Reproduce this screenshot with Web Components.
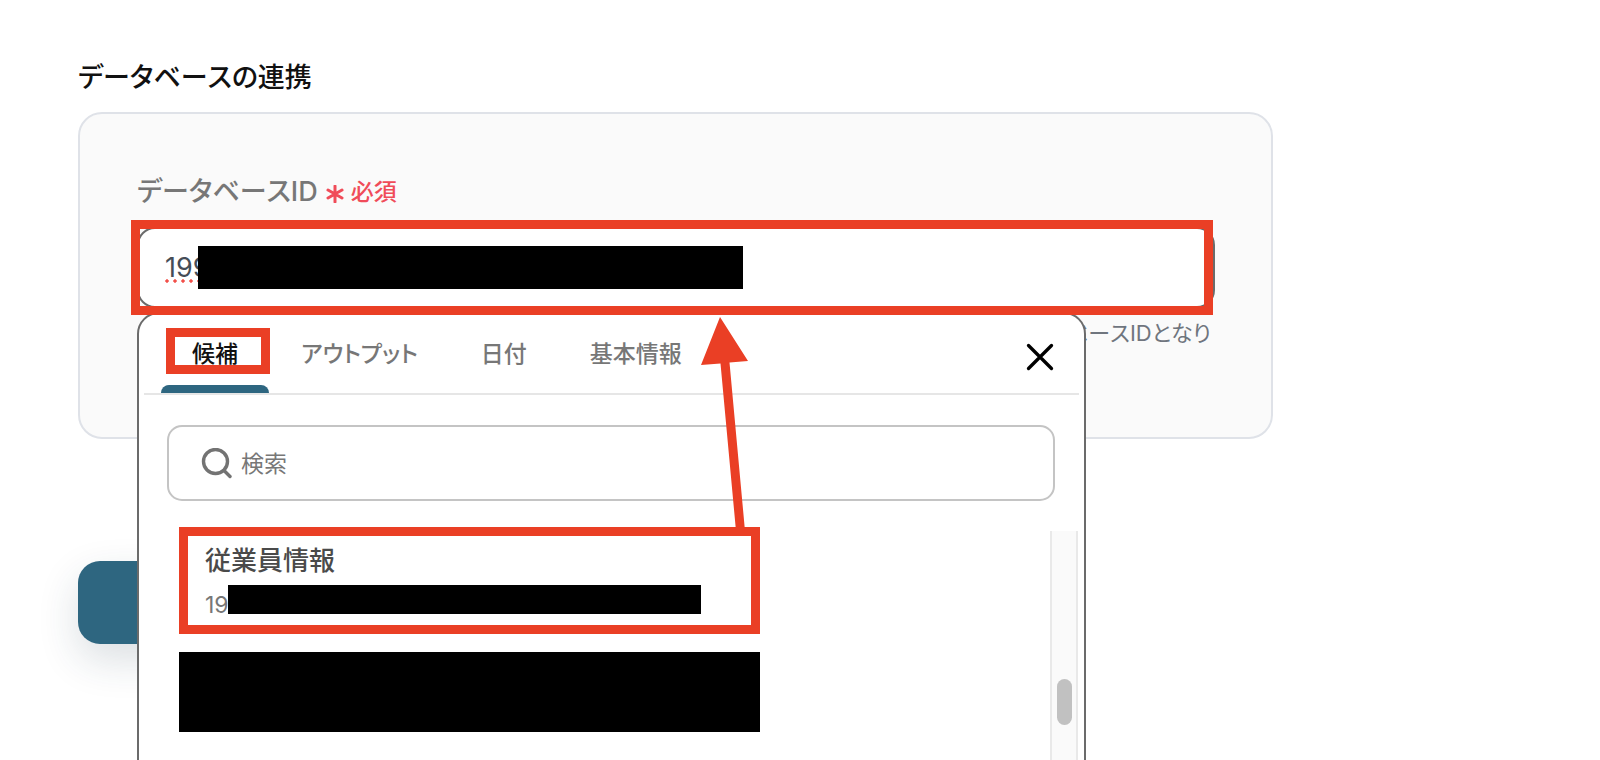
<!DOCTYPE html>
<html lang="ja">
<head>
<meta charset="utf-8">
<meta name="viewport" content="width=device-width, initial-scale=1">
<title>データベースの連携</title>
<style>
  body {
    margin: 0;
    background: #fff;
    font-family: Inter, "Noto Sans CJK JP", sans-serif;
    font-kerning: none;
    --text-l: 27px;
    --text-m: 23px;
    --mark: #ea3f25;
    --accent: #2e6680;
    --outline: #6b6b6b;
  }
</style>
</head>
<body>
<settings-page></settings-page>
<script>
const define = (name, html) => customElements.define(name, class extends HTMLElement {
  constructor() {
    super();
    const t = document.createElement('template');
    t.innerHTML = html;
    this.attachShadow({ mode: 'open' }).append(t.content.cloneNode(true));
  }
});

/* Red outline laid over the content it surrounds */
define('mark-frame', `
<style>
  :host { display: block; position: absolute; box-sizing: border-box; border: 9px solid var(--mark); pointer-events: none; z-index: 30; }
</style>`);

/* Black bar that hides private data */
define('redaction-bar', `
<style>:host { display: block; background: #000; }</style>`);

define('section-card', `
<style>
  :host { display: block; }
  h2 { margin: 0 0 14px; font-size: var(--text-l); line-height: 40px; font-weight: 500; color: #111; font-feature-settings: "palt"; }
  .card { border: 2px solid #dfe2e8; border-radius: 24px; background: #fafafa; padding: 58px 56px 56px 57px; }
</style>
<section aria-labelledby="h">
  <h2 id="h"><slot name="title"></slot></h2>
  <div class="card"><slot></slot></div>
</section>`);

define('tab-bar', `
<style>
  :host { display: flex; align-items: flex-end; justify-content: space-between; margin: 0 5px; border-bottom: 2px solid #e6e6e6; }
  .tabs { display: flex; gap: 1px; margin-left: 17px; }
  .tabs button { position: relative; height: 79px; padding: 1px 31px 0; border: 0; background: none; color: #777;
    font: 500 var(--text-m)/32px Inter, "Noto Sans CJK JP", sans-serif; font-kerning: none; font-feature-settings: "palt"; }
  .tabs button[aria-selected=true] { color: #111; }
  .tabs button[aria-selected=true]::after { content: ""; position: absolute; left: 0; right: 0; bottom: 0; height: 8px; background: var(--accent); border-radius: 8px 8px 0 0; }
  mark-frame { left: 5px; right: -1px; top: 14px; height: 46px; }
  .close { border: 0; background: none; padding: 0; margin: 0 21px 18px 0; width: 36px; height: 36px; }
  .close svg { display: block; }
</style>
<div class="tabs" role="tablist">
  <button role="tab" aria-selected="true">候補<mark-frame></mark-frame></button>
  <button role="tab" aria-selected="false">アウトプット</button>
  <button role="tab" aria-selected="false">日付</button>
  <button role="tab" aria-selected="false">基本情報</button>
</div>
<button class="close" aria-label="閉じる">
  <svg width="36" height="36" viewBox="0 0 36 36" fill="none" stroke="#000" stroke-width="3.3" stroke-linecap="round"><path d="M6.500 6.500 29.500 29.500M29.500 6.500 6.500 29.500"/></svg>
</button>`);

define('search-box', `
<style>
  :host { display: block; }
  label { display: flex; align-items: center; gap: 8px; box-sizing: border-box; height: 76px; padding: 2px 32px 0; border: 2px solid #c4c4c4; border-radius: 15px; background: #fff; }
  input { flex: 1; min-width: 0; border: 0; padding: 0; outline: 0; background: none; height: 40px; font: 400 var(--text-m)/32px Inter, "Noto Sans CJK JP", sans-serif; color: #444; }
  input::placeholder { color: #777; opacity: 1; }
</style>
<label>
  <svg width="32" height="32" viewBox="0 0 32 32" fill="none" stroke="#737373" stroke-width="3.4" stroke-linecap="round" aria-hidden="true"><circle cx="14.500" cy="13.500" r="12"/><path d="m23 22.500 6 6"/></svg>
  <input type="search" placeholder="検索" aria-label="検索">
</label>`);

define('candidate-item', `
<style>
  :host { display: block; }
  button { position: relative; display: flex; flex-direction: column; align-items: flex-start; box-sizing: border-box; width: 581px; height: 107px; padding: 14px 26px 10px; border: 0; background: #fff; text-align: left; }
  .name { font: 500 26px/40px Inter, "Noto Sans CJK JP", sans-serif; color: #4a4a4a; }
  .id { font: 400 var(--text-m)/32px Inter, "Noto Sans CJK JP", sans-serif; color: #777; padding-top: 8px; }
  redaction-bar { position: absolute; left: 49px; top: 58px; width: 473px; height: 29px; }
  mark-frame { inset: 0; }
</style>
<button>
  <span class="name"><slot name="name"></slot></span>
  <span class="id"><slot name="id"></slot></span>
  <redaction-bar></redaction-bar>
  <mark-frame></mark-frame>
</button>`);

define('scroll-track', `
<style>
  :host { display: block; box-sizing: border-box; width: 28px; padding: 148px 5px 0; border: solid #e9e9e9; border-width: 0 2px; background: #fafafa; }
  .thumb { width: 15px; height: 46px; border-radius: 8px; background: #c1c1c1; }
</style>
<div class="thumb"></div>`);

define('candidate-menu', `
<style>
  :host { display: block; box-sizing: border-box; border: 2px solid var(--outline); border-radius: 22px; background: #fff; }
  search-box { margin: 30px 29px 0 28px; }
  .list { display: flex; justify-content: space-between; margin: 26px 6px 0 40px; }
  .items { display: flex; flex-direction: column; gap: 18px; }
  .items redaction-bar { height: 80px; }
  scroll-track { margin-top: 4px; height: 300px; }
  .arrow { position: absolute; left: 558px; top: 3px; z-index: 31; pointer-events: none; }
</style>
<tab-bar></tab-bar>
<search-box></search-box>
<div class="list">
  <div class="items">
    <candidate-item><span slot="name">従業員情報</span><span slot="id">19</span></candidate-item>
    <redaction-bar></redaction-bar>
  </div>
  <scroll-track></scroll-track>
</div>
<svg class="arrow" width="60" height="216" viewBox="0 0 60 216" fill="#ea3f25" aria-hidden="true"><path d="M23 0 51 44 32.500 45.500 48 214 39 214 23.500 46.500 4 48Z"/></svg>`);

define('database-field', `
<style>
  :host { display: block; }
  .head { display: flex; align-items: center; gap: 8px; height: 40px; margin-bottom: 15px; }
  label { font-size: var(--text-l); line-height: 40px; font-weight: 500; color: #777; font-feature-settings: "palt"; }
  .required { display: flex; align-items: center; gap: 7px; font-size: var(--text-m); line-height: 32px; font-weight: 500; color: #f04c59; }
  .required svg { margin-top: 4px; }
  .box { position: relative; }
  input { display: block; box-sizing: border-box; width: 100%; height: 81px; margin: 0; padding: 0 26px; border: 2px solid var(--outline); border-radius: 18px; background: #fff; outline: 0; color: #454d57; font: 400 var(--text-l)/40px Inter, "Noto Sans CJK JP", sans-serif; }
  .spelling { position: absolute; left: 28px; top: 52px; width: 33px; height: 4px; background: radial-gradient(circle at 2px 2px, #f2504a 50%, transparent 70%) 0 0 / 4px 4px; background: radial-gradient(circle closest-side at 2px 2px, #f2504a 70%, transparent 100%) 0 0 / 8px 4px; }
  redaction-bar { position: absolute; left: 61px; top: 19px; width: 545px; height: 43px; }
  mark-frame { left: -6px; right: 2px; top: -7px; height: 95px; }
  candidate-menu { position: absolute; left: 0; right: 129px; top: 85px; height: 500px; z-index: 20; }
  p { margin: 9px 4px 0; min-height: 64px; font-size: 22px; line-height: 32px; color: #6f757e; text-align: right; font-feature-settings: "palt"; }
</style>
<div class="head">
  <label for="db">データベースID</label>
  <span class="required"><svg width="18" height="18" viewBox="0 0 18 18" fill="none" stroke="currentColor" stroke-width="3" stroke-linecap="round" aria-hidden="true"><path d="M9 1v16M2 5l14 8M16 5 2 13"/></svg>必須</span>
</div>
<div class="box">
  <input id="db" type="text" value="199" spellcheck="false">
  <span class="spelling"></span>
  <redaction-bar></redaction-bar>
  <mark-frame></mark-frame>
  <candidate-menu></candidate-menu>
</div>
<p>データベースIDとなり</p>`);

define('primary-action', `
<style>
  :host { display: block; }
  button { display: block; width: 300px; height: 83px; border: 0; border-radius: 22px; background: var(--accent); box-shadow: 0 16px 40px rgba(30, 55, 75, .16); }
</style>
<button aria-label="保存"></button>`);

define('settings-page', `
<style>
  :host { display: block; box-sizing: border-box; height: 100vh; overflow: hidden; padding: 58px 78px 0; }
  main { max-width: 1195px; }
  primary-action { margin-top: 122px; }
</style>
<main>
  <section-card>
    <span slot="title">データベースの連携</span>
    <database-field></database-field>
  </section-card>
  <primary-action></primary-action>
</main>`);
</script>
</body>
</html>
